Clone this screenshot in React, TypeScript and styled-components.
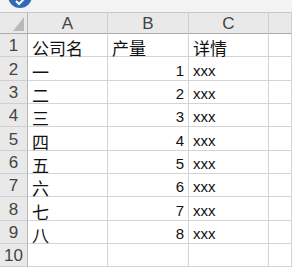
import styled, { createGlobalStyle } from "styled-components";

const GlobalStyle = createGlobalStyle`
  html, body {
    margin: 0;
    padding: 0;
    background: #ffffff;
    overflow: hidden;
  }
  * {
    box-sizing: border-box;
  }
`;

const columns = ["A", "B", "C", ""];
const rows: [string, string, string][] = [
  ["公司名", "产量", "详情"],
  ["一", "1", "xxx"],
  ["二", "2", "xxx"],
  ["三", "3", "xxx"],
  ["四", "4", "xxx"],
  ["五", "5", "xxx"],
  ["六", "6", "xxx"],
  ["七", "7", "xxx"],
  ["八", "8", "xxx"],
  ["", "", ""],
];

const isNumber = (v: string) => /^\d+$/.test(v);
const isLatin = (v: string) => /^[\x00-\x7f]+$/.test(v);

export default function App() {
  return (
    <>
      <GlobalStyle />
      <Page>
        <TopBar>
          <Badge width="26" height="12" viewBox="0 0 26 12">
            <circle cx="12" cy="-4" r="12" fill="#2e6cb8" />
            <path d="M8 1 L11 4 L16 -1" stroke="#ffffff" strokeWidth="2" fill="none" />
          </Badge>
        </TopBar>
        <Sheet>
          <Corner>
            <CornerMark />
          </Corner>
          {columns.map((c, i) => (
            <ColHead key={i}>{c}</ColHead>
          ))}
          {rows.map((r, ri) => (
            <Row key={ri} r={r} index={ri + 1} />
          ))}
        </Sheet>
      </Page>
    </>
  );
}

function Row({ r, index }: { r: [string, string, string]; index: number }) {
  return (
    <>
      <RowHead>{index}</RowHead>
      {r.map((v, i) => (
        <Cell key={i} $right={isNumber(v)} $latin={isLatin(v)}>
          {v}
        </Cell>
      ))}
      <Cell $right={false} $latin />
    </>
  );
}

const Page = styled.div`
  width: 292px;
  height: 269px;
  display: flex;
  flex-direction: column;
  overflow: hidden;
  font-family: "Liberation Sans", "Noto Sans CJK SC", sans-serif;
`;

const TopBar = styled.div`
  height: 13px;
  flex: none;
  background: #f3f3f3;
  border-bottom: 1px solid #c8c8c8;
  position: relative;
`;

const Badge = styled.svg`
  position: absolute;
  left: 8px;
  top: 0;
`;

const Sheet = styled.div`
  display: grid;
  grid-template-columns: 28px 80px 81px 80px 1fr;
  grid-template-rows: 21px repeat(10, 23.33px);
`;

const Corner = styled.div`
  background: #e9e9e9;
  border-right: 1px solid #b7b7b7;
  border-bottom: 1px solid #ababab;
  position: relative;
`;

const CornerMark = styled.div`
  position: absolute;
  right: 3px;
  bottom: 2px;
  width: 0;
  height: 0;
  border-left: 11px solid transparent;
  border-bottom: 14px solid #b9b9b9;
`;

const ColHead = styled.div`
  background: #e9e9e9;
  border-right: 1px solid #cfcfcf;
  border-bottom: 1px solid #ababab;
  display: flex;
  align-items: flex-end;
  justify-content: center;
  padding-bottom: 1px;
  font-size: 17px;
  color: #444444;
  line-height: 1;
`;

const RowHead = styled.div`
  background: #e9e9e9;
  border-right: 1px solid #b7b7b7;
  border-bottom: 1px solid #cfcfcf;
  display: flex;
  align-items: flex-end;
  justify-content: center;
  padding-bottom: 2px;
  font-size: 17px;
  color: #444444;
  line-height: 1;
`;

const Cell = styled.div<{ $right: boolean; $latin: boolean }>`
  border-right: 1px solid #d4d4d4;
  border-bottom: 1px solid #d4d4d4;
  display: flex;
  align-items: flex-end;
  justify-content: ${({ $right }) => ($right ? "flex-end" : "flex-start")};
  padding: 0 4px ${({ $latin }) => ($latin ? "2px" : "0px")} 4px;
  font-size: ${({ $latin }) => ($latin ? "15px" : "17px")};
  font-family: ${({ $latin }) =>
    $latin ? `"Liberation Sans", sans-serif` : `"Noto Sans CJK SC", sans-serif`};
  color: #111111;
  line-height: 1;
  white-space: nowrap;
`;
